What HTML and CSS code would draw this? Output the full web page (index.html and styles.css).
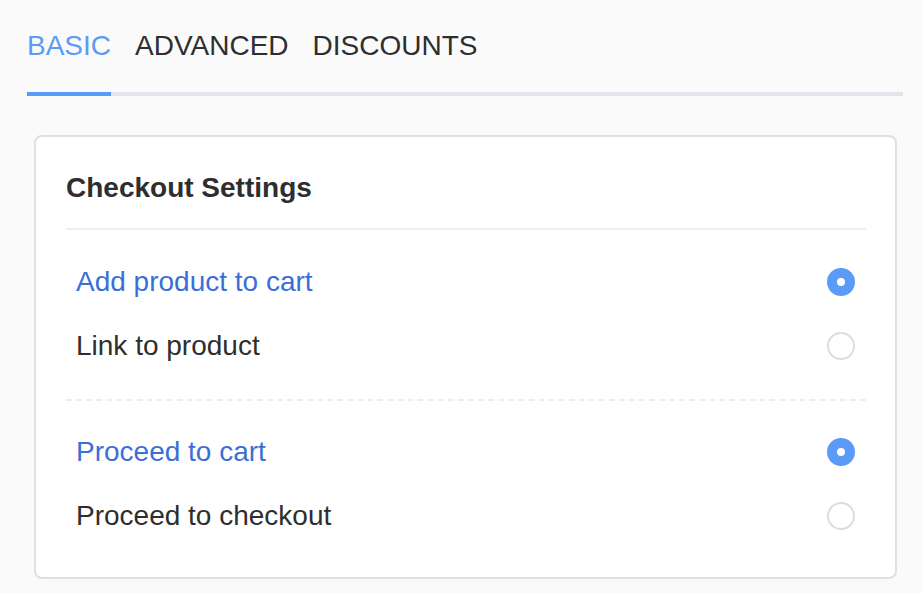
FILE: index.html
```html
<!DOCTYPE html>
<html>
<head>
<meta charset="utf-8">
<link rel="stylesheet" href="styles.css">
</head>
<body>
<div class="page">
  <nav class="tabs">
    <div class="tab active">BASIC</div>
    <div class="tab">ADVANCED</div>
    <div class="tab">DISCOUNTS</div>
  </nav>
  <section class="card">
    <h2 class="card-title">Checkout Settings</h2>
    <div class="group">
      <div class="row checked"><span class="label">Add product to cart</span><span class="radio"></span></div>
      <div class="row"><span class="label">Link to product</span><span class="radio"></span></div>
    </div>
    <div class="group dashed">
      <div class="row checked"><span class="label">Proceed to cart</span><span class="radio"></span></div>
      <div class="row"><span class="label">Proceed to checkout</span><span class="radio"></span></div>
    </div>
  </section>
</div>
</body>
</html>
```
FILE: styles.css
```css
* { box-sizing: border-box; }
html, body { margin: 0; padding: 0; }
body {
  background: #fafafa;
  font-family: "Liberation Sans", Arial, sans-serif;
  color: #2e2e2e;
}
.page {
  padding: 30px 19px 0 27px;
}
.tabs {
  display: flex;
  gap: 24px;
  border-bottom: 4px solid #e4e5ec;
}
.tab {
  font-size: 28px;
  line-height: 32px;
  padding-bottom: 30px;
  margin-bottom: -4px;
  border-bottom: 4px solid transparent;
  color: #2e2e2e;
}
.tab.active {
  color: #5b9af5;
  border-bottom-color: #5b9af5;
}
.card {
  margin: 39px 6px 0 7px;
  background: #fff;
  border: 2px solid #e0e0e0;
  border-radius: 8px;
  padding: 35px 29px 8px 30px;
  height: 444px;
}
.card-title {
  margin: 0;
  font-size: 28px;
  line-height: 32px;
  font-weight: bold;
  color: #2e2e2e;
  padding-bottom: 24px;
  border-bottom: 2px solid #eeeeef;
}
.group {
  padding: 20px 11px 21px 10px;
}
.group.dashed {
  border-top: 2px dashed #eeeeef;
  padding-top: 19px;
}
.row {
  display: flex;
  align-items: center;
  justify-content: space-between;
  height: 64px;
}
.label {
  font-size: 28px;
  line-height: 32px;
  color: #2e2e2e;
}
.row.checked .label { color: #3b6fd8; }
.radio {
  width: 28px;
  height: 28px;
  border-radius: 50%;
  border: 2px solid #dcdce3;
  background: #fff;
}
.row.checked .radio {
  border: 10px solid #5b9bf8;
  background: #fff;
}
```
